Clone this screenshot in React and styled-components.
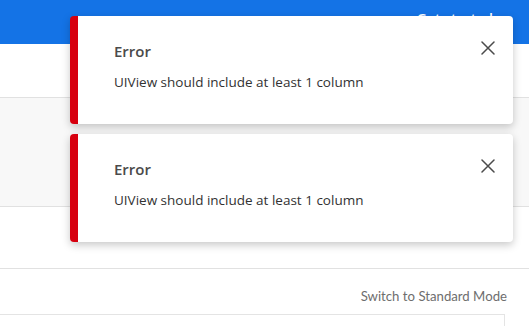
import styled, { createGlobalStyle } from "styled-components";

const GlobalStyle = createGlobalStyle`
  html, body {
    margin: 0;
    padding: 0;
    background: #ffffff;
    font-family: "Open Sans", "Liberation Sans", sans-serif;
  }
`;

const toasts = [
  { id: 1, title: "Error", message: "UIView should include at least 1 column" },
  { id: 2, title: "Error", message: "UIView should include at least 1 column" },
];

export default function App() {
  return (
    <>
      <GlobalStyle />
      <SCPage>
        <SCHeader>
          <SCHeaderLink>Get started</SCHeaderLink>
        </SCHeader>
        <SCBand $height={53} />
        <SCBand $height={108} $grey />
        <SCBand $height={61} />
        <SCToolbar>
          <SCModeLink>Switch to Standard Mode</SCModeLink>
        </SCToolbar>
        <SCPanel />
        <SCToastStack>
          {toasts.map((t) => (
            <SCToast key={t.id}>
              <SCToastBody>
                <SCToastTitle>{t.title}</SCToastTitle>
                <SCToastMessage>{t.message}</SCToastMessage>
              </SCToastBody>
              <SCClose aria-label="Close">
                <svg width="14" height="14" viewBox="0 0 14 14">
                  <path
                    d="M1 1 L13 13 M13 1 L1 13"
                    stroke="#4b4b4b"
                    strokeWidth="1.5"
                    strokeLinecap="round"
                  />
                </svg>
              </SCClose>
            </SCToast>
          ))}
        </SCToastStack>
      </SCPage>
    </>
  );
}

const SCPage = styled.div`
  position: relative;
  width: 529px;
  height: 326px;
  overflow: hidden;
  display: flex;
  flex-direction: column;
`;

const SCHeader = styled.div`
  height: 44px;
  flex-shrink: 0;
  background: #1473e6;
  display: flex;
  justify-content: flex-end;
  padding: 9px 36px 0 0;
  box-sizing: border-box;
`;

const SCHeaderLink = styled.span`
  color: #ffffff;
  font-size: 14px;
  font-weight: 600;
`;

const SCBand = styled.div`
  height: ${(p) => p.$height}px;
  flex-shrink: 0;
  background: ${(p) => (p.$grey ? "#f8f8f8" : "#ffffff")};
  border-bottom: 1px solid #e1e1e1;
`;

const SCToolbar = styled.div`
  display: flex;
  justify-content: flex-end;
  padding: 19px 22px 0 0;
  height: 45px;
  box-sizing: border-box;
`;

const SCModeLink = styled.span`
  font-family: "Lato", "Liberation Sans", sans-serif;
  font-size: 13.2px;
  color: #6e6e6e;
`;

const SCPanel = styled.div`
  margin-right: 24px;
  flex: 1;
  border-top: 1px solid #e4e4e4;
  border-right: 1px solid #e4e4e4;
`;

const SCToastStack = styled.div`
  position: absolute;
  top: 16px;
  right: 16px;
  width: 443px;
  display: flex;
  flex-direction: column;
  gap: 10px;
`;

const SCToast = styled.div`
  height: 108px;
  box-sizing: border-box;
  background: #ffffff;
  border-radius: 4px;
  border-left: 8px solid #d7000f;
  box-shadow: 0 3px 8px rgba(0, 0, 0, 0.22);
  display: flex;
  align-items: flex-start;
  justify-content: space-between;
  padding: 25px 18px 0 36px;
`;

const SCToastBody = styled.div`
  display: flex;
  flex-direction: column;
  gap: 10px;
`;

const SCToastTitle = styled.div`
  font-family: "Open Sans", "Liberation Sans", sans-serif;
  font-size: 15px;
  line-height: 21px;
  font-weight: 600;
  color: #4b4b4b;
`;

const SCToastMessage = styled.div`
  font-family: "Open Sans", "Liberation Sans", sans-serif;
  font-size: 13.5px;
  line-height: 20px;
  color: #323232;
`;

const SCClose = styled.button`
  border: none;
  background: none;
  padding: 0;
  width: 14px;
  height: 14px;
  margin-top: 0;
  cursor: pointer;
  display: flex;
`;
